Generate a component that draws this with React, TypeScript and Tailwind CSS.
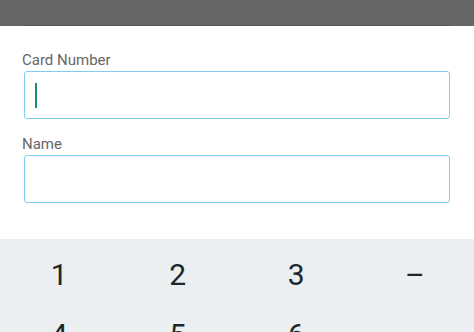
export default function App() {
  const keys = ["1", "2", "3", "–", "4", "5", "6", ""]
  return (
    <div className="w-[474px] h-[332px] overflow-hidden bg-white font-['Roboto',sans-serif] flex flex-col">
      {/* Top bar */}
      <div className="h-[26px] bg-[#666666] flex flex-col justify-end shrink-0">
        <div className="mx-6 h-px bg-[#555555]" />
      </div>

      {/* Form */}
      <div className="h-[213px] shrink-0 px-[22px] pt-[24px]">
        <label className="block text-[15px] leading-[20px] text-[#666666]">Card Number</label>
        <div className="mt-[1px] ml-[2px] mr-[2px] h-[48px] rounded-[3px] border border-[#7fcdef] flex items-center pl-[10px]">
          <div className="w-[2px] h-[25px] bg-[#1b8c72]" />
        </div>
        <label className="block mt-[15px] text-[15px] leading-[20px] text-[#666666]">Name</label>
        <div className="mt-[1px] ml-[2px] mr-[2px] h-[48px] rounded-[3px] border border-[#7fcdef]" />
      </div>

      {/* Keypad */}
      <div className="flex-1 bg-[#eceff1] grid grid-cols-4 auto-rows-[60px] pt-[5px]">
        {keys.map((k, i) => (
          <div key={i} className="flex items-center justify-center text-[30px] text-[#1c262b]">
            {k}
          </div>
        ))}
      </div>
    </div>
  )
}
